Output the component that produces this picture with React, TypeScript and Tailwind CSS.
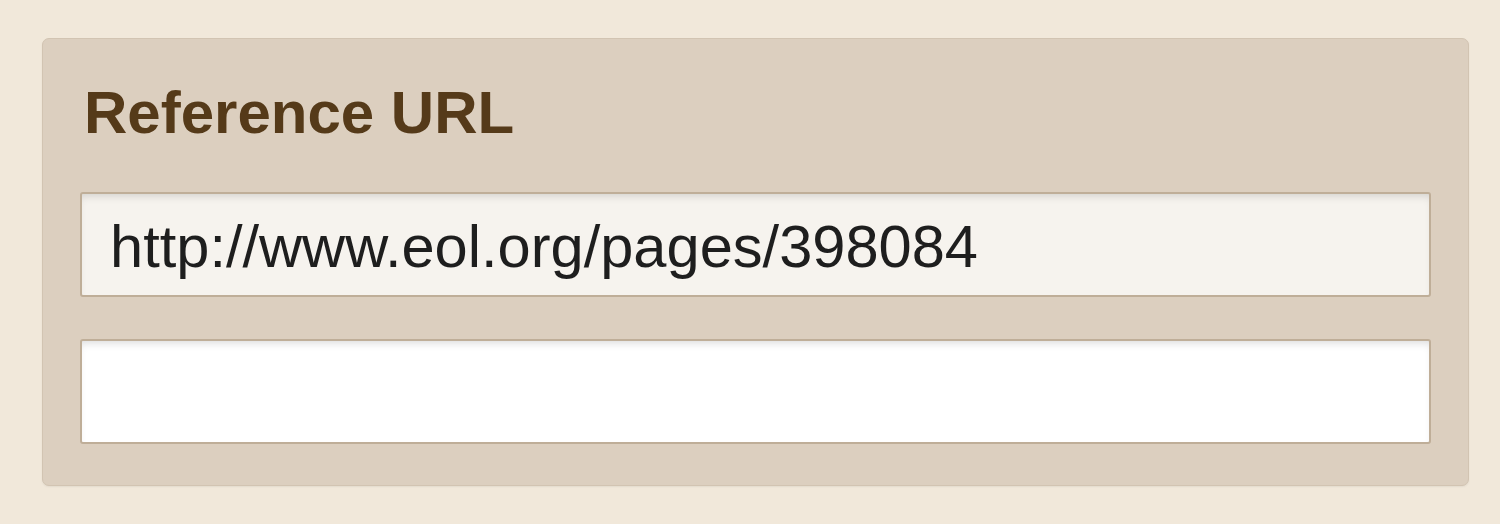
export default function App() {
  return (
    <div className="w-[1500px] h-[524px] bg-[#f1e8da] pt-[38px] pl-[42px]" style={{ fontFamily: '"Liberation Sans", Arial, sans-serif' }}>
      <div className="w-[1427px] h-[448px] rounded-[7px] bg-[#dccfbf] border border-[#d2c4b2] shadow-[0_1px_2px_rgba(0,0,0,0.06)] px-[37px] pt-[44px]">
        <h2 className="pl-[4px] text-[60px] leading-[60px] font-bold text-[#553a19]">Reference URL</h2>
        <div className="mt-[49px] flex flex-col gap-[42px]">
          <div className="h-[105px] rounded-[3px] border-2 border-[#bfae98] bg-[#f6f3ee] shadow-[inset_0_6px_8px_-4px_rgba(0,0,0,0.15)] flex items-center pl-[28px] pt-[4px] text-[59.6px] text-[#1e1e1e]">
            http://www.eol.org/pages/398084
          </div>
          <div className="h-[105px] rounded-[3px] border-2 border-[#bfae98] bg-white shadow-[inset_0_6px_8px_-4px_rgba(0,0,0,0.15)]" />
        </div>
      </div>
    </div>
  );
}
